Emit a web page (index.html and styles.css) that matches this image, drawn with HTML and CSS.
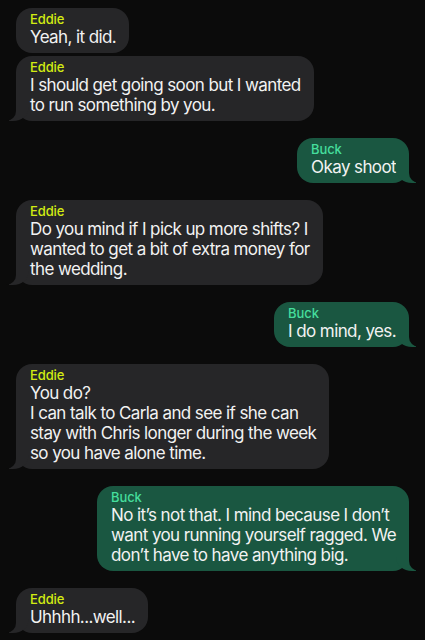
FILE: index.html
```html
<!DOCTYPE html>
<html lang="en">

<head>
    <meta charset="UTF-8">
    <meta name="viewport" content="width=device-width, initial-scale=1.0">
    <title>Messages</title>
    <link rel="stylesheet" href="styles.css">
</head>

<body>
    <div class="thread">
        <!-- Eddie -->
        <div class="group">
            <div class="msg in">
                <div class="name">Eddie</div>
                <div class="text">Yeah, it did.</div>
            </div>
            <div class="msg in tail">
                <div class="name">Eddie</div>
                <div class="text">I should get going soon but I wanted<br>to run something by you.</div>
            </div>
        </div>

        <!-- Buck -->
        <div class="group">
            <div class="msg out tail">
                <div class="name">Buck</div>
                <div class="text">Okay shoot</div>
            </div>
        </div>

        <div class="group">
            <div class="msg in tail">
                <div class="name">Eddie</div>
                <div class="text">Do you mind if I pick up more shifts? I<br>wanted to get a bit of extra money for<br>the wedding.</div>
            </div>
        </div>

        <div class="group">
            <div class="msg out tail">
                <div class="name">Buck</div>
                <div class="text">I do mind, yes.</div>
            </div>
        </div>

        <div class="group">
            <div class="msg in tail">
                <div class="name">Eddie</div>
                <div class="text">You do?<br>I can talk to Carla and see if she can<br>stay with Chris longer during the week<br>so you have alone time.</div>
            </div>
        </div>

        <div class="group">
            <div class="msg out tail">
                <div class="name">Buck</div>
                <div class="text">No it’s not that. I mind because I don’t<br>want you running yourself ragged. We<br>don’t have to have anything big.</div>
            </div>
        </div>

        <div class="group">
            <div class="msg in tail">
                <div class="name">Eddie</div>
                <div class="text">Uhhhh...well...</div>
            </div>
        </div>
    </div>
</body>

</html>
```

FILE: styles.css
```css
/* chat thread, dark mode */
:root {
    --bg: #0b0b0b;
    --in-color: #262628;
    --out-color: #1a5741;
    --eddie: #d2eb12;
    --buck: #45de9c;
}

body {
    background: var(--bg);
    margin: 0;
    padding: 0;
    font-family: Inter, "Noto Sans", "Liberation Sans", sans-serif;
    color: #f2f2f2;
}

.thread {
    display: flex;
    flex-direction: column;
    gap: 17px;
    padding: 8px 16px;
}

.group {
    display: flex;
    flex-direction: column;
    gap: 3px;
}

.msg {
    position: relative;
    width: fit-content;
    padding: 4px 13px 6px 14px;
    border-radius: 16px;
    box-sizing: border-box;
}

.name {
    font-size: 13px;
    line-height: 15px;
    font-weight: 500;
    letter-spacing: -0.1px;
}

.text {
    font-size: 17px;
    line-height: 20px;
    letter-spacing: -0.6px;
    white-space: nowrap;
}

/* incoming - Eddie */
.in {
    background: var(--in-color);
    align-self: flex-start;
}

.in .name {
    color: var(--eddie);
}

/* outgoing - Buck */
.out {
    background: var(--out-color);
    align-self: flex-end;
}

.out .name {
    color: var(--buck);
}

/* bubble tails */
.tail::before,
.tail::after {
    content: "";
    position: absolute;
    bottom: 0;
    height: 22px;
}

.in.tail::before {
    left: -7px;
    width: 20px;
    background: var(--in-color);
    border-bottom-right-radius: 16px 14px;
}

.in.tail::after {
    left: -26px;
    width: 26px;
    background: var(--bg);
    border-bottom-right-radius: 10px;
}

.out.tail::before {
    right: -7px;
    width: 20px;
    background: var(--out-color);
    border-bottom-left-radius: 16px 14px;
}

.out.tail::after {
    right: -26px;
    width: 26px;
    background: var(--bg);
    border-bottom-left-radius: 10px;
}
```
